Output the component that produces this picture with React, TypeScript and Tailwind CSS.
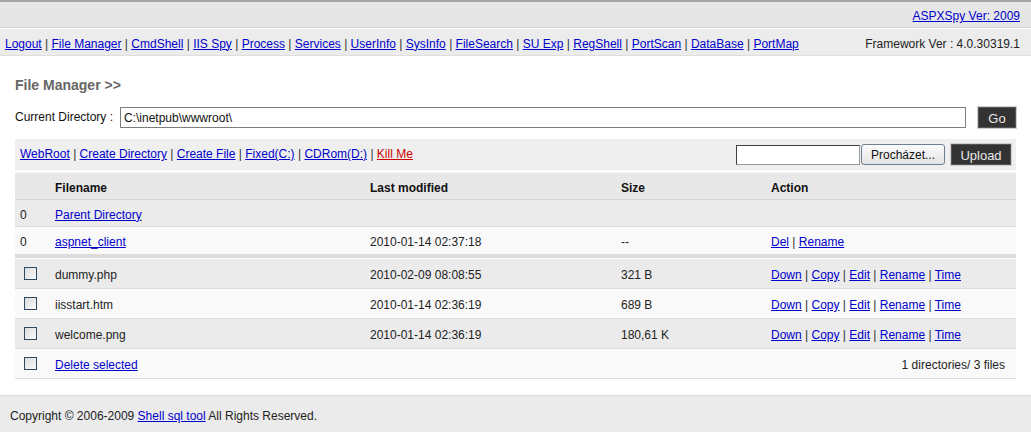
import React from "react";

const navItems = [
  "Logout",
  "File Manager",
  "CmdShell",
  "IIS Spy",
  "Process",
  "Services",
  "UserInfo",
  "SysInfo",
  "FileSearch",
  "SU Exp",
  "RegShell",
  "PortScan",
  "DataBase",
  "PortMap",
];

const files = [
  { name: "dummy.php", modified: "2010-02-09 08:08:55", size: "321 B", bg: "bg-[#ebebeb]" },
  { name: "iisstart.htm", modified: "2010-01-14 02:36:19", size: "689 B", bg: "bg-[#f9f9f9]" },
  { name: "welcome.png", modified: "2010-01-14 02:36:19", size: "180,61 K", bg: "bg-[#ebebeb]" },
];

const linkCls = "text-[#0000cc] underline";
const cols = "grid grid-cols-[40px_315px_251px_150px_1fr] items-center pt-[4px]";

function Sep() {
  return <span className="text-[#333]"> | </span>;
}

function LinkList({ items }: { items: string[] }) {
  return (
    <span>
      {items.map((t, i) => (
        <React.Fragment key={t}>
          {i > 0 && <Sep />}
          <a href="#" className={linkCls}>
            {t}
          </a>
        </React.Fragment>
      ))}
    </span>
  );
}

function Check() {
  return (
    <input
      type="checkbox"
      className="appearance-none ml-[9px] -mt-[4px] w-[13px] h-[13px] border border-[#2f4a63] bg-gradient-to-br from-[#dcdcdc] to-[#fafafa] block"
    />
  );
}

function DarkButton({ label, w }: { label: string; w: string }) {
  return (
    <button
      className={`${w} h-[21px] pt-[2px] bg-[#333333] text-[#e8e8e8] text-[13px] border border-[#555] outline outline-1 outline-[#cfcfcf]`}
    >
      {label}
    </button>
  );
}

export default function App() {
  return (
    <div className="w-[1031px] h-[446px] bg-white text-[12px] text-[#222] font-['Liberation_Sans',Arial,sans-serif] leading-[15px]">
      {/* top bar */}
      <div className="h-[28px] pt-[4px] bg-[#e6e6e6] border-t-2 border-[#a5a5a5] border-b border-b-[#cfcfcf] flex items-center justify-end pr-[11px]">
        <a href="#" className={linkCls}>
          ASPXSpy Ver: 2009
        </a>
      </div>
      <div className="h-[28px] pt-[4px] bg-[#ececec] border-t border-white border-b border-b-[#dedede] flex items-center justify-between pl-[5px] pr-[11px]">
        <LinkList items={navItems} />
        <span className="text-[#222]">Framework Ver : 4.0.30319.1</span>
      </div>

      {/* content */}
      <div className="px-[15px]">
        <h2 className="mt-[20px] text-[14px] leading-[18px] font-bold text-[#666]">File Manager &gt;&gt;</h2>

        <div className="mt-[13px] flex items-center h-[21px]">
          <span className="w-[105px] text-[#111]">Current Directory :</span>
          <input
            readOnly
            value="C:\inetpub\wwwroot\"
            className="w-[846px] h-[21px] border border-[#7d7d7d] px-[3px] pt-[1px] text-[12px] text-[#111] bg-white"
          />
          <div className="ml-[12px]">
            <DarkButton label="Go" w="w-[38px]" />
          </div>
        </div>

        <div className="mt-[11px] h-[31px] bg-[#efefef] flex items-center justify-between pl-[5px] pr-[5px]">
          <span>
            <LinkList items={["WebRoot", "Create Directory", "Create File", "Fixed(C:)", "CDRom(D:)"]} />
            <Sep />
            <a href="#" className="text-[#cc0000] underline">
              Kill Me
            </a>
          </span>
          <div className="flex items-center">
            <div className="w-[124px] h-[20px] bg-white border border-[#999] border-t-[#404040] border-l-[#404040]" />
            <button className="ml-[1px] w-[84px] h-[21px] pt-[1px] rounded-[3px] border border-[#6f7f90] bg-gradient-to-b from-[#fbfbfb] to-[#e4e4e4] text-[12px] text-[#111]">
              Procházet...
            </button>
            <div className="ml-[6px]">
              <DarkButton label="Upload" w="w-[60px]" />
            </div>
          </div>
        </div>

        {/* table */}
        <div className="mt-[2px] border-t border-[#f7f7f7]">
          <div className={`${cols} h-[27px] bg-[#e8e8e8] border-b border-[#d6d6d6] font-bold text-[#111]`}>
            <span />
            <span>Filename</span>
            <span>Last modified</span>
            <span>Size</span>
            <span>Action</span>
          </div>
          <div className={`${cols} h-[27px] bg-[#ebebeb] border-b border-[#dcdcdc]`}>
            <span className="pl-[5px]">0</span>
            <a href="#" className={`${linkCls} justify-self-start`}>
              Parent Directory
            </a>
          </div>
          <div className={`${cols} h-[27px] bg-[#f9f9f9]`}>
            <span className="pl-[5px]">0</span>
            <a href="#" className={`${linkCls} justify-self-start`}>
              aspnet_client
            </a>
            <span>2010-01-14 02:37:18</span>
            <span>--</span>
            <span>
              <LinkList items={["Del", "Rename"]} />
            </span>
          </div>
          <div className="h-[5px] bg-[#dcdcdc] border-b border-white" />
          {files.map((f) => (
            <div key={f.name} className={`${cols} h-[30px] ${f.bg} border-b border-[#dcdcdc]`}>
              <Check />
              <span>{f.name}</span>
              <span>{f.modified}</span>
              <span>{f.size}</span>
              <span>
                <LinkList items={["Down", "Copy", "Edit", "Rename", "Time"]} />
              </span>
            </div>
          ))}
          <div className="h-[30px] pt-[4px] bg-[#f9f9f9] border-b border-[#dcdcdc] flex items-center justify-between pr-[11px]">
            <div className="flex items-center">
              <Check />
              <a href="#" className={`${linkCls} ml-[18px]`}>
                Delete selected
              </a>
            </div>
            <span>1 directories/ 3 files</span>
          </div>
        </div>
      </div>

      {/* footer */}
      <div className="mt-[16px] h-[37px] pt-[4px] bg-[#ebebeb] border-t border-[#dcdcdc] flex items-center pl-[10px]">
        <span>
          Copyright © 2006-2009{" "}
          <a href="#" className={linkCls}>
            Shell sql tool
          </a>{" "}
          All Rights Reserved.
        </span>
      </div>
    </div>
  );
}
